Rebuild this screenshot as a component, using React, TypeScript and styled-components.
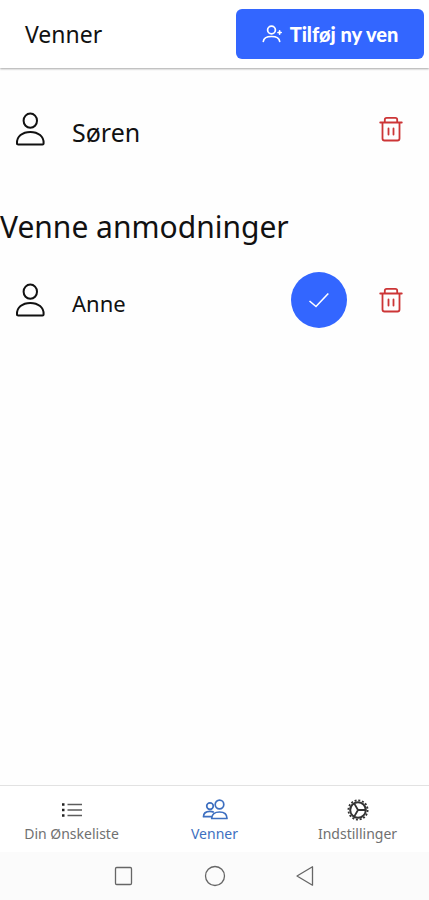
import React from 'react';
import styled, { createGlobalStyle } from 'styled-components';

const GlobalStyle = createGlobalStyle`
  *, *::before, *::after { box-sizing: border-box; }
  body { margin: 0; background: #fefefe; color: #111; font-family: "Noto Sans", sans-serif; }
  button { font: inherit; border: 0; padding: 0; cursor: pointer; }
  svg { display: block; flex: none; }
`;

const Screen = styled.div`
  min-height: 100vh;
  display: flex;
  flex-direction: column;
`;

const Header = styled.header`
  height: 68px;
  padding: 0 5px 0 25px;
  display: flex;
  align-items: center;
  justify-content: space-between;
  background: #fff;
  box-shadow: 0 1px 2px rgba(0, 0, 0, 0.35);
`;

const Title = styled.h1`
  margin: 0;
  font-size: 23px;
  line-height: 32px;
  font-weight: 400;
`;

const AddButton = styled.button`
  width: 188px;
  height: 50px;
  border-radius: 6px;
  background: #3366ff;
  color: #fff;
  display: flex;
  align-items: center;
  justify-content: center;
  gap: 8px;
  font-family: Lato, "Noto Sans", sans-serif;
  font-weight: 900;
  font-size: 20px;
  line-height: 24px;
`;

const Main = styled.main`
  flex: 1;
  padding-top: 33px;
`;

const List = styled.ul`
  list-style: none;
  margin: 0;
  padding: 0;
`;

const Friend = styled.li`
  height: 56px;
  padding: 0 26px 0 14px;
  display: flex;
  align-items: center;
`;

const Name = styled.span<{ $large?: boolean }>`
  flex: 1;
  margin-left: 26px;
  padding-top: 6px;
  font-size: ${({ $large }) => ($large ? 25 : 22)}px;
  line-height: 32px;
`;

const SectionTitle = styled.h2`
  margin: 48px 0 23px;
  font-size: 30px;
  line-height: 44px;
  font-weight: 400;
`;

const AcceptButton = styled.button`
  width: 56px;
  height: 56px;
  margin-right: 32px;
  border-radius: 50%;
  background: #3366ff;
  color: #fff;
  display: grid;
  place-items: center;
`;

const DeleteButton = styled.button`
  background: none;
  color: #cc3536;
`;

const TabBar = styled.nav`
  height: 67px;
  display: grid;
  grid-template-columns: repeat(3, 1fr);
  background: #fff;
  border-top: 1px solid #e2e2e2;
`;

const Tab = styled.a<{ $active?: boolean }>`
  display: flex;
  flex-direction: column;
  align-items: center;
  gap: 2px;
  padding-top: 12px;
  color: ${({ $active }) => ($active ? '#3d6fc0' : '#707070')};
  font-size: 14px;
  line-height: 20px;
  text-decoration: none;
`;

const SystemBar = styled.footer`
  height: 48px;
  display: flex;
  align-items: center;
  justify-content: center;
  gap: 67px;
  background: #fbfbfb;
`;

const SystemButton = styled.button`
  background: none;
  color: #666;
`;

const PersonIcon = () => (
  <svg width="32" height="36" viewBox="0 0 32 36" fill="none" stroke="currentColor" strokeWidth="2" strokeLinejoin="round" aria-hidden="true">
    <ellipse cx="16.3" cy="9.7" rx="6.7" ry="7.1" />
    <path d="M3 32.4C2.6 25.4 8.4 20.9 16.3 20.9S30 25.4 29.6 32.4c0 .7-.5 1-1.2 1H4.2c-.7 0-1.2-.3-1.2-1Z" />
  </svg>
);

const AddPersonIcon = () => (
  <svg width="20" height="20" viewBox="0 0 20 20" fill="none" stroke="currentColor" strokeWidth="1.7" strokeLinecap="round" aria-hidden="true">
    <circle cx="9.5" cy="6" r="3.9" />
    <path d="M1.3 17.5c.3-3.2 3.3-5 8.2-5s7.900 1.800 8.200 5M16 8.500h3.200M17.600 6.900v3.200" />
  </svg>
);

const TrashIcon = () => (
  <svg width="24" height="28" viewBox="0 0 24 28" fill="none" stroke="currentColor" strokeWidth="1.8" strokeLinecap="round" strokeLinejoin="round" aria-hidden="true">
    <path d="M1.2 7.500h21.600M3.500 7.500v16c0 1.300.7 2 2 2h13c1.300 0 2-.7 2-2v-16M5.800 7.200V4.700c0-1.200.7-1.900 1.900-1.900h8.600c1.200 0 1.900.7 1.900 1.900v2.500M9.500 13.500v6M14.500 13.500v6" />
  </svg>
);

const CheckIcon = () => (
  <svg width="24" height="24" viewBox="0 0 24 24" fill="none" stroke="currentColor" strokeWidth="1.6" aria-hidden="true">
    <path d="m2.500 13 6.500 5.500L21.300 5.500" />
  </svg>
);

const ListIcon = () => (
  <svg width="24" height="24" viewBox="0 0 24 24" stroke="#5c5c5c" strokeWidth="1.5" aria-hidden="true">
    <path d="M7.500 6.500H22M7.500 12H22M7.500 17.500H22" />
    <path d="M2 6.500h2.500M2 12h2.500M2 17.500h2.500" stroke="#222" strokeWidth="2.3" />
  </svg>
);

const PeopleIcon = () => (
  <svg width="26" height="24" viewBox="0 0 26 24" fill="none" stroke="currentColor" strokeWidth="1.7" strokeLinejoin="round" aria-hidden="true">
    <circle cx="17.500" cy="6.500" r="4.300" />
    <path d="M9.700 20.500c0-4 3.200-6.500 7.800-6.500s7.500 2.500 7.500 6.500ZM9.500 18.700H1.500c0-3.400 2.500-5.400 6.400-5.400 1.600 0 2.900.4 3.900 1" />
    <circle cx="8" cy="8.100" r="3.300" />
  </svg>
);

const GearIcon = () => (
  <svg width="24" height="24" viewBox="0 0 24 24" fill="none" stroke="#333" aria-hidden="true">
    <circle cx="12" cy="12" r="7.8" strokeWidth="2" />
    <circle cx="12" cy="12" r="9.6" strokeWidth="1.8" strokeDasharray="2 1.77" />
    <path d="M12 12H20M12 12 8 5.100M12 12 8 18.900" strokeWidth="1.8" />
  </svg>
);

const SystemIcon = ({ d }: { d: string }) => (
  <svg width="24" height="24" viewBox="0 0 24 24" fill="none" stroke="currentColor" strokeWidth="1.3" strokeLinejoin="round" aria-hidden="true">
    <path d={d} />
  </svg>
);

const systemButtons = [
  { label: 'Seneste', d: 'M4.700 3.500h13.600q1.200 0 1.200 1.200v14.600q0 1.200-1.200 1.200H4.700q-1.200 0-1.200-1.200V4.700q0-1.200 1.200-1.200Z' },
  { label: 'Hjem', d: 'M21.500 12a9.500 9.500 0 1 1-19 0 9.500 9.500 0 0 1 19 0Z' },
  { label: 'Tilbage', d: 'M18.500 2.800v18.400L3 12Z' },
];

export default function App() {
  return (
    <Screen>
      <GlobalStyle />
      <Header>
        <Title>Venner</Title>
        <AddButton type="button"><AddPersonIcon />Tilføj ny ven</AddButton>
      </Header>
      <Main>
        <List>
          <Friend>
            <PersonIcon />
            <Name $large>Søren</Name>
            <DeleteButton type="button" aria-label="Slet Søren"><TrashIcon /></DeleteButton>
          </Friend>
        </List>
        <SectionTitle>Venne anmodninger</SectionTitle>
        <List>
          <Friend>
            <PersonIcon />
            <Name>Anne</Name>
            <AcceptButton type="button" aria-label="Accepter Anne"><CheckIcon /></AcceptButton>
            <DeleteButton type="button" aria-label="Afvis Anne"><TrashIcon /></DeleteButton>
          </Friend>
        </List>
      </Main>
      <TabBar>
        <Tab href="#liste"><ListIcon />Din Ønskeliste</Tab>
        <Tab href="#venner" $active aria-current="page"><PeopleIcon />Venner</Tab>
        <Tab href="#indstillinger"><GearIcon />Indstillinger</Tab>
      </TabBar>
      <SystemBar>
        {systemButtons.map(({ label, d }) => (
          <SystemButton key={label} type="button" aria-label={label}><SystemIcon d={d} /></SystemButton>
        ))}
      </SystemBar>
    </Screen>
  );
}
